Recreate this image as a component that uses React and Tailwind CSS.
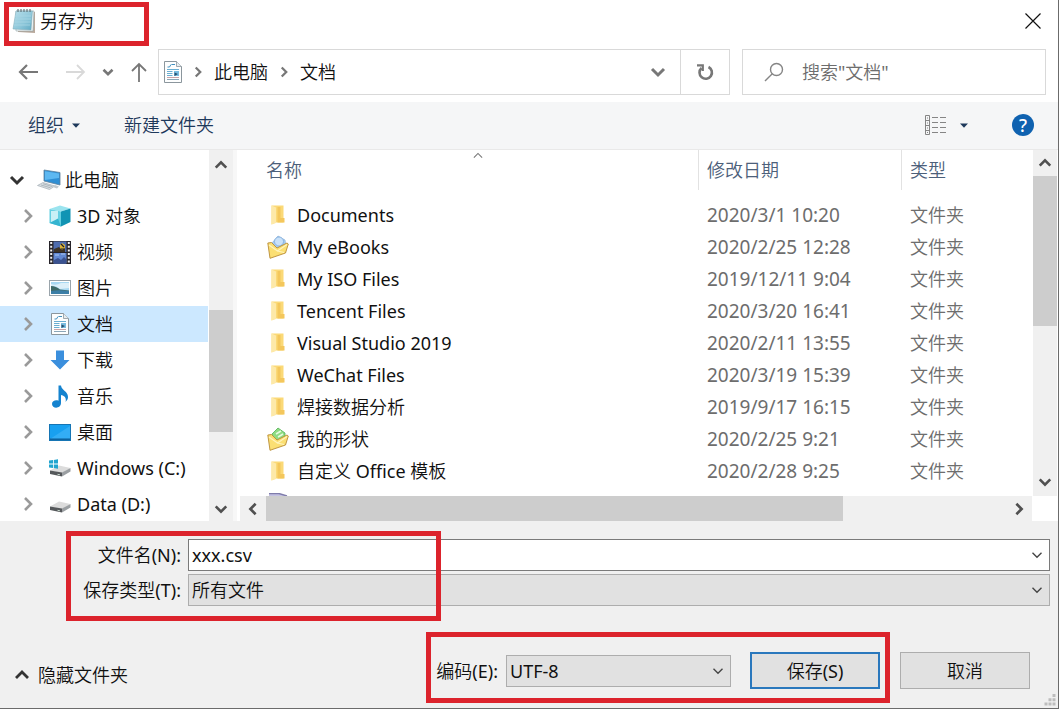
import React from 'react';

const CHEVRONS = {
  up: 'M2 11 L8 5 L14 11',
  down: 'M2 5 L8 11 L14 5',
  left: 'M11 2 L5 8 L11 14',
  right: 'M5 2 L11 8 L5 14',
};

function Chevron({ dir, className = '', weight = 3 }) {
  return (
    <svg viewBox="0 0 16 16" className={`shrink-0 ${className}`} fill="none" stroke="currentColor" strokeWidth={weight} aria-hidden="true">
      <path d={CHEVRONS[dir]} />
    </svg>
  );
}

function Caret() {
  return (
    <svg viewBox="0 0 8 5" className="h-[5px] w-2 shrink-0" aria-hidden="true">
      <path d="M0 0.5 H8 L4 4.8 Z" fill="#1e395b" />
    </svg>
  );
}

function NotepadIcon() {
  return (
    <svg viewBox="0 0 24 26" className="h-[26px] w-6 shrink-0" aria-hidden="true">
      <defs>
        <linearGradient id="pad" x1="0" y1="0" x2="1" y2="1">
          <stop offset="0" stopColor="#b9dfea" />
          <stop offset="0.6" stopColor="#8cc6d9" />
          <stop offset="1" stopColor="#5fa9c2" />
        </linearGradient>
      </defs>
      <path d="M5 3 L23 4 V25 L6 24 Z" fill="#b9a99c" />
      <path d="M4 3 L22 3 L21 23 L4 23 Z" fill="#f4f7f7" stroke="#90a4a9" strokeWidth="0.6" />
      <path d="M4 3 L20.500 3 L19 22 L1 21 Z" fill="url(#pad)" stroke="#7aa7b4" strokeWidth="0.5" />
      <path d="M3 8 H19 M3 11 H19 M2.500 14 H18.500 M2 17 H18" stroke="#a9d7e4" strokeWidth="0.8" />
      <path d="M6 1 V4 M9 1 V4 M12 1 V4 M15 1 V4 M18 1 V4" stroke="#65767b" strokeWidth="1.2" />
    </svg>
  );
}

function DocumentIcon() {
  return (
    <svg viewBox="0 0 18 22" className="h-[22px] w-[18px] shrink-0" aria-hidden="true">
      <path d="M0.500 0.500 H12.500 L17.500 5.500 V21.500 H0.500 Z" fill="#fdfefe" stroke="#8b969d" />
      <path d="M12.500 0.500 V5.500 H17.500" fill="#e6ecef" stroke="#8b969d" strokeWidth="0.8" />
      <path d="M7.500 3.500 H11 M3.500 6 H5.500 L7 3.500" stroke="#4190c0" strokeWidth="1" fill="none" />
      <path d="M3 8.500 H15 M3 10.500 H8.500 M3 12.500 H8.500 M3 14.500 H8.500" stroke="#6aaed2" strokeWidth="1" />
      <path d="M3 16.500 H15" stroke="#c9a3a8" strokeWidth="1" />
      <path d="M3 18.500 H15" stroke="#8aa6b8" strokeWidth="1" />
      <rect x="10" y="10" width="5" height="5" fill="#79bce0" />
      <path d="M10.500 11.500 L14 13 L10.500 15 Z" fill="#28506f" />
    </svg>
  );
}

function ComputerIcon() {
  return (
    <svg viewBox="0 0 24 22" className="h-[22px] w-6" aria-hidden="true">
      <path d="M7 1 L23 3.500 V16 L7 12 Z" fill="#2f8fd4" stroke="#5d7f99" strokeWidth="0.8" />
      <path d="M8 2.300 L22 4.500 L22 9 L8 11 Z" fill="#5db8f1" />
      <path d="M6 13.500 L18 17 L12.500 20.500 L0.500 16.500 Z" fill="#d9dee2" stroke="#a5afb6" strokeWidth="0.7" />
      <path d="M4 16 L13.500 18.800 M6 14.800 L15.500 17.600" stroke="#9aa6ae" strokeWidth="0.7" />
      <path d="M18 16 L22 17.500 L20 19.500 L17 18.500 Z" fill="#c1c9ce" />
    </svg>
  );
}

function CubeIcon() {
  return (
    <svg viewBox="0 0 22 22" className="h-[22px] w-[22px]" aria-hidden="true">
      <path d="M0.500 4 L11 0.500 L21.500 3.500 L12 6.500 Z" fill="#9be4ef" />
      <path d="M0.500 4 L12 6.500 V21.500 L0.500 18 Z" fill="#63cfe2" />
      <path d="M12 6.500 L21.500 3.500 V17 L12 21.500 Z" fill="#1194b4" />
      <path d="M2 6 L9 5.800 V16.500 L2 17 Z" fill="#c9f0f6" />
      <path d="M0.500 18 L9 13.500 L12 21.500 Z" fill="#35b4d0" />
    </svg>
  );
}

function VideoIcon() {
  return (
    <svg viewBox="0 0 22 23" className="h-[23px] w-[22px]" aria-hidden="true">
      <rect width="22" height="23" fill="#262329" />
      <path d="M2.200 1 V23 M19.800 1 V23" stroke="#f0f0f0" strokeWidth="2" strokeDasharray="2 1.700" />
      <rect x="4.500" y="0.500" width="13" height="10.500" fill="#4e6cae" />
      <rect x="4.500" y="12" width="13" height="10.500" fill="#6288d2" />
      <path d="M11 4 L13 2 L16 4 V9 H11 Z" fill="#d9b23c" />
      <path d="M5 8 L10 6 L13 9 L16 7 V11 H5 Z" fill="#3d3326" />
      <path d="M12 3 L15 6 M12 8 L15 8" stroke="#1f2126" strokeWidth="1.2" />
      <path d="M5 19 L9 17 L12 19 L15 16 L17 18 V22.500 H5 Z" fill="#3a5290" />
      <path d="M6 14 H10 M12 13 H16" stroke="#a8c6f2" strokeWidth="1" />
    </svg>
  );
}

function PictureIcon() {
  return (
    <svg viewBox="0 0 22 16" className="h-4 w-[22px]" aria-hidden="true">
      <rect x="0.500" y="0.500" width="21" height="15" fill="#fff" stroke="#9aa4ab" />
      <rect x="2" y="2" width="18" height="12" fill="#a8d8f2" />
      <path d="M2 6 Q6 5 11 9 L20 8 V3 H12 Q7 6 2 4 Z" fill="#dceff9" />
      <path d="M2 6 Q7 6 11 9.500 L20 10.500 V12 H2 Z" fill="#3f6a67" />
      <path d="M2 11 Q10 9.500 20 11 V14 H2 Z" fill="#3c7ea6" />
    </svg>
  );
}

function DownloadIcon() {
  return (
    <svg viewBox="0 0 20 20" className="h-5 w-5" aria-hidden="true">
      <path d="M6 0.500 H14 V10 H19.500 L10 19.500 L0.500 10 H6 Z" fill="#3b8fdd" />
    </svg>
  );
}

function MusicIcon() {
  return (
    <svg viewBox="0 0 18 23" className="h-[23px] w-[18px]" aria-hidden="true">
      <path d="M7.500 0.500 H10 C10.500 5.500 17 6 17 12 C17 14 16 15.500 14.500 17 C15.800 12.500 13 10.500 10 10 V18 C10 24 1 24 1 19 C1 15.500 5 14.500 7.500 15.700 Z" fill="#1583cf" />
    </svg>
  );
}

function DesktopIcon() {
  return (
    <svg viewBox="0 0 22 17" className="h-[17px] w-[22px]" aria-hidden="true">
      <rect x="0.500" y="0.500" width="21" height="16" fill="#18a0f0" stroke="#1675b4" />
      <path d="M1 15 L21 2 V15 Z" fill="#33adf5" />
      <path d="M1 15.200 H21" stroke="#0d5d97" strokeWidth="1.400" />
    </svg>
  );
}

function DriveIcon({ system }) {
  return (
    <svg viewBox="0 0 22 18" className="h-[18px] w-[22px]" aria-hidden="true">
      <path d="M1 11.500 L10 6.500 L21.500 9 L13 14 Z" fill="#dcdcdc" />
      <path d="M1 11.500 L13 13.500 V17.500 L1 15 Z" fill="#55585b" />
      <path d="M13 13.500 L21.500 9 V12.500 L13 17.500 Z" fill="#9b9fa2" />
      <path d="M8.500 15.300 L11 15.800" stroke="#c5d5ca" strokeWidth="1" />
      {system && (
        <g fill="#22a5cf">
          <path d="M0 1.500 L4 1 V4.600 H0 Z M4.800 0.900 L9 0.300 V4.600 H4.800 Z M0 5.400 H4 V9 L0 8.500 Z M4.800 5.400 H9 V9.700 L4.800 9.100 Z" />
        </g>
      )}
    </svg>
  );
}

function FolderIcon() {
  return (
    <svg viewBox="0 0 14 20" className="h-5 w-3.5" aria-hidden="true">
      <path d="M0.500 0.500 H12.500 V17.500 H5 L0.500 19.500 Z" fill="#fbd977" />
      <path d="M0.500 0.500 L5 2.500 V18 L0.500 19.500 Z" fill="#fde9a9" />
      <path d="M6.500 2 H9.500 V13 H13.500 V17.500 H6.500 Z" fill="#f4c75c" />
    </svg>
  );
}

function OpenFolderIcon({ kind }) {
  return (
    <svg viewBox="0 0 22 24" className="h-6 w-[22px]" aria-hidden="true">
      {kind === 'book' ? (
        <g>
          <path d="M5 8 L11 1 L18 5 L19 11 L9 16 Z" fill="#a9cdf0" stroke="#8fb3da" strokeWidth="0.7" />
          <circle cx="12" cy="6.500" r="4.500" fill="#c9e1f8" stroke="#7fabdc" strokeWidth="0.8" />
        </g>
      ) : (
        <g>
          <path d="M5 7 L11 1 L18 6 L18 12 L8 15 Z" fill="#8fdc83" stroke="#4fb053" strokeWidth="0.8" />
          <path d="M9 7 L14 4 M11 10 L16 7" stroke="#e5fbe0" strokeWidth="1.500" />
        </g>
      )}
      <path d="M0.800 8 L4.500 7.500 L10 13 L20 8 L21.300 9 L18.500 18 L3 23.300 Z" fill="#fbdf73" stroke="#b98c35" strokeWidth="0.9" />
      <path d="M2 10 L10.500 16 L20 9.500 M10.500 16 L17 17.500" fill="none" stroke="#fff4bd" strokeWidth="1.200" />
    </svg>
  );
}

function ArchiveIcon() {
  return (
    <svg viewBox="0 0 20 20" className="h-5 w-5" aria-hidden="true">
      <path d="M1 0.500 H11 L19 3 V19 H1 Z" fill="#c3c1e2" />
      <path d="M1 0.500 H11 L19 3" fill="none" stroke="#7f7cab" strokeWidth="1.400" />
    </svg>
  );
}

const TREE = [
  { name: '3D 对象', icon: <CubeIcon /> },
  { name: '视频', icon: <VideoIcon /> },
  { name: '图片', icon: <PictureIcon /> },
  { name: '文档', icon: <DocumentIcon />, selected: true },
  { name: '下载', icon: <DownloadIcon /> },
  { name: '音乐', icon: <MusicIcon /> },
  { name: '桌面', icon: <DesktopIcon /> },
  { name: 'Windows (C:)', icon: <DriveIcon system /> },
  { name: 'Data (D:)', icon: <DriveIcon /> },
];

const FILES = [
  { name: 'Documents', date: '2020/3/1 10:20' },
  { name: 'My eBooks', date: '2020/2/25 12:28', icon: <OpenFolderIcon kind="book" /> },
  { name: 'My ISO Files', date: '2019/12/11 9:04' },
  { name: 'Tencent Files', date: '2020/3/20 16:41' },
  { name: 'Visual Studio 2019', date: '2020/2/11 13:55' },
  { name: 'WeChat Files', date: '2020/3/19 15:39' },
  { name: '焊接数据分析', date: '2019/9/17 16:15' },
  { name: '我的形状', date: '2020/2/25 9:21', icon: <OpenFolderIcon kind="shape" /> },
  { name: '自定义 Office 模板', date: '2020/2/28 9:25' },
];

function Highlight({ className }) {
  return <div aria-hidden="true" className={`pointer-events-none absolute border-5 border-[#dc232c] ${className}`} />;
}

function ScrollButton({ dir, className }) {
  return (
    <button type="button" aria-label={`scroll ${dir}`} className={`flex shrink-0 items-center justify-center text-[#505050] ${className}`}>
      <Chevron dir={dir} className="size-3.5" />
    </button>
  );
}

function TitleBar() {
  return (
    <header className="relative flex h-12 shrink-0 items-center justify-between pr-4 pb-1.5 pl-3">
      <h1 className="flex items-center gap-1">
        <NotepadIcon />
        另存为
      </h1>
      <button type="button" aria-label="关闭" className="p-px">
        <svg viewBox="0 0 16 16" className="size-4" stroke="#111" strokeWidth="1.200" aria-hidden="true">
          <path d="M0.500 0.500 L15.500 15.500 M15.500 0.500 L0.500 15.500" />
        </svg>
      </button>
      <Highlight className="top-0.5 left-1 h-11 w-[145px]" />
    </header>
  );
}

function NavBar() {
  return (
    <nav className="flex h-[54px] shrink-0 items-start pt-px pr-3">
      <div className="flex h-[46px] w-[158px] shrink-0 items-center pl-[18px] text-[#777]">
        <button type="button" aria-label="后退" className="w-12">
          <svg viewBox="0 0 20 16" className="h-4 w-5" fill="none" stroke="currentColor" strokeWidth="2.200" aria-hidden="true">
            <path d="M20 8 H2 M9 1 L2 8 L9 15" />
          </svg>
        </button>
        <button type="button" aria-label="前进" disabled className="w-9 text-[#d9d9d9]">
          <svg viewBox="0 0 20 16" className="h-4 w-5" fill="none" stroke="currentColor" strokeWidth="1.800" aria-hidden="true">
            <path d="M0 8 H18 M11 1 L18 8 L11 15" />
          </svg>
        </button>
        <button type="button" aria-label="最近位置" className="w-[29px]">
          <Chevron dir="down" className="size-3" weight={3.5} />
        </button>
        <button type="button" aria-label="上移">
          <svg viewBox="0 0 16 20" className="h-5 w-4" fill="none" stroke="currentColor" strokeWidth="1.800" aria-hidden="true">
            <path d="M8 20 V2 M1 9 L8 2 L15 9" />
          </svg>
        </button>
      </div>
      <div className="flex h-[46px] flex-1 items-center border border-[#d9d9d9] pl-[5px]">
        <DocumentIcon />
        <Chevron dir="right" className="mx-2.5 size-3 text-[#777]" />
        <a href="#pc">此电脑</a>
        <Chevron dir="right" className="mx-2.5 size-3 text-[#777]" />
        <a href="#documents">文档</a>
        <button type="button" aria-label="展开路径" className="ml-auto flex h-full w-[46px] items-center justify-center border-r border-[#d9d9d9] text-[#777]">
          <Chevron dir="down" className="size-4" />
        </button>
        <button type="button" aria-label="刷新" className="flex h-full w-12 items-center justify-center">
          <svg viewBox="0 0 18 18" className="size-[18px]" fill="none" stroke="#777" strokeWidth="2.600" aria-hidden="true">
            <path d="M5.500 5 A6.200 6.200 0 1 0 12.500 4" />
            <path d="M1 2.300 H6.800 V8" strokeWidth="2.200" />
          </svg>
        </button>
      </div>
      <label className="ml-3 flex h-[46px] w-[304px] shrink-0 items-center gap-[18px] border border-[#d9d9d9] pl-[21px]">
        <svg viewBox="0 0 20 20" className="size-5 shrink-0" fill="none" stroke="#858585" strokeWidth="1.400" aria-hidden="true">
          <circle cx="12.500" cy="7.500" r="6" />
          <path d="M8.300 11.800 L1 19" />
        </svg>
        <input type="search" aria-label="搜索" placeholder={'搜索"文档"'} className="w-full min-w-0 bg-transparent outline-none placeholder:text-[#6d6d6d]" />
      </label>
    </nav>
  );
}

function Toolbar() {
  return (
    <div className="flex h-12 shrink-0 items-center border-b border-[#e9e9e9] bg-[#f5f6f7] pr-6 pb-px pl-7 text-[#1e395b]">
      <button type="button" className="mr-11 flex items-center gap-2">
        组织
        <Caret />
      </button>
      <button type="button">新建文件夹</button>
      <button type="button" aria-label="更改视图" className="ml-auto flex items-center gap-3.5">
        <svg viewBox="0 0 22 22" className="size-[22px]" fill="none" stroke="#858585" aria-hidden="true">
          <path d="M1.500 1.500 H5.500 V20.500 H1.500 Z M1.500 6.500 H5.500 M1.500 11.500 H5.500 M1.500 16.500 H5.500" />
          <path d="M3 4 H4 M3 9 H4 M3 14 H4 M3 18.500 H4" />
          <path d="M8 3.500 H14 M16 3.500 H22 M8 8.500 H14 M16 8.500 H22 M8 13.500 H14 M16 13.500 H22 M8 18.500 H14 M16 18.500 H22" />
        </svg>
        <Caret />
      </button>
      <button type="button" aria-label="帮助" className="ml-11 flex size-[22px] items-center justify-center rounded-full bg-[#0f62b0] leading-[22px] font-medium text-white">
        ?
      </button>
    </div>
  );
}

function Sidebar() {
  return (
    <aside className="flex w-[237px] shrink-0 border-r-4 border-[#f7f7f7]">
      <div className="min-w-0 flex-1 overflow-hidden pt-3">
        <button type="button" className="flex h-9 w-full items-center pl-[9px]">
          <Chevron dir="down" className="mr-3 size-4 text-[#333]" />
          <ComputerIcon />
          <span className="pl-1">此电脑</span>
        </button>
        <ul>
          {TREE.map((item) => (
            <li key={item.name}>
              <button type="button" className={`flex h-9 w-full items-center pl-5 text-left ${item.selected ? 'bg-[#cce8ff]' : ''}`}>
                <Chevron dir="right" className="size-4 text-[#9a9a9a]" weight={2.6} />
                <span className="mr-1 ml-[11px] flex w-[26px] shrink-0 items-center justify-center">{item.icon}</span>
                <span className="whitespace-nowrap">{item.name}</span>
              </button>
            </li>
          ))}
        </ul>
      </div>
      <div className="ml-px flex w-6 shrink-0 flex-col bg-[#f0f0f0]">
        <ScrollButton dir="up" className="h-[30px]" />
        <div className="grow-[130] basis-0" />
        <div className="grow-[122] basis-0 bg-[#cdcdcd]" />
        <div className="grow-[64] basis-0" />
        <ScrollButton dir="down" className="h-[25px]" />
      </div>
    </aside>
  );
}

function FileList() {
  return (
    <section className="flex min-w-0 flex-1 flex-col">
      <div className="flex min-h-0 flex-1">
        <div className="min-w-0 flex-1 overflow-hidden">
          <table className="w-full table-fixed border-collapse text-left">
            <thead className="text-[#4c607a]">
              <tr className="h-[49px] align-top">
                <th className="relative p-0 font-normal">
                  <div className="flex h-10 items-center pl-[29px]">名称</div>
                  <Chevron dir="up" className="absolute top-0 left-[234px] h-[11px] w-3.5 text-[#777]" weight={1.6} />
                </th>
                <th className="w-[203px] p-0 font-normal">
                  <div className="flex h-10 items-center border-l border-[#e2e2e2] pl-2">修改日期</div>
                </th>
                <th className="w-[132px] p-0 font-normal">
                  <div className="flex h-10 items-center border-l border-[#e2e2e2] pl-2">类型</div>
                </th>
              </tr>
            </thead>
            <tbody>
              {FILES.map((file) => (
                <tr key={file.name} className="h-8">
                  <td className="p-0">
                    <div className="flex h-8 items-center pl-[29px]">
                      <span className="mr-2 flex w-[23px] justify-center">{file.icon ?? <FolderIcon />}</span>
                      {file.name}
                    </div>
                  </td>
                  <td className="p-0 pl-[9px] text-[19px] leading-8 text-[#6d6d6d]">{file.date}</td>
                  <td className="p-0 pl-[9px] text-[#6d6d6d]">文件夹</td>
                </tr>
              ))}
              <tr className="h-8">
                <td colSpan={3} className="p-0 pl-[31px]">
                  <ArchiveIcon />
                </td>
              </tr>
            </tbody>
          </table>
        </div>
        <div className="flex w-6 shrink-0 flex-col bg-[#f0f0f0]">
          <ScrollButton dir="up" className="h-[26px]" />
          <div className="grow-[150] basis-0 bg-[#cdcdcd]" />
          <div className="grow-[142] basis-0" />
          <ScrollButton dir="down" className="h-7" />
        </div>
      </div>
      <div className="mr-[25px] ml-[3px] flex h-[25px] shrink-0 bg-[#f0f0f0]">
        <ScrollButton dir="left" className="w-[26px]" />
        <div className="grow-[577] basis-0 bg-[#cdcdcd]" />
        <div className="grow-[163] basis-0" />
        <ScrollButton dir="right" className="w-[26px]" />
      </div>
    </section>
  );
}

function Dropdown({ id, value, className = '' }) {
  return (
    <div className={`relative ${className}`}>
      <select id={id} defaultValue={value} className="h-8 w-full appearance-none rounded-none border border-[#adadad] bg-[#e1e1e1] pl-[3px] outline-none">
        <option>{value}</option>
      </select>
      <Chevron dir="down" className="pointer-events-none absolute top-2.5 right-[7px] size-3 text-[#444]" weight={1.8} />
    </div>
  );
}

function Footer() {
  return (
    <footer className="shrink-0 bg-[#f0f0f0]">
      <div className="relative grid grid-cols-[181px_1fr] items-center gap-x-[7px] gap-y-[3px] pt-[18px] pr-2">
        <label htmlFor="filename" className="text-right">文件名(N):</label>
        <div className="relative">
          <input id="filename" type="text" defaultValue="xxx.csv" className="h-8 w-full border border-[#7a7a7a] bg-white pl-[3px] outline-none" />
          <button type="button" aria-label="历史文件名" className="absolute top-2.5 right-[7px] text-[#444]">
            <Chevron dir="down" className="size-3" weight={1.8} />
          </button>
        </div>
        <label htmlFor="filetype" className="text-right">保存类型(T):</label>
        <Dropdown id="filetype" value="所有文件" />
        <Highlight className="top-2.5 left-[66px] h-[90px] w-[375px]" />
      </div>
      <div className="relative flex items-center pt-[46px] pr-7 pb-[19px] pl-3.5">
        <button type="button" className="mt-2 flex items-center gap-2">
          <Chevron dir="up" className="size-4 text-[#333]" weight={2.8} />
          隐藏文件夹
        </button>
        <div className="relative ml-auto flex items-center">
          <label htmlFor="encoding">编码(E):</label>
          <Dropdown id="encoding" value="UTF-8" className="ml-2 w-[225px]" />
          <button type="button" className="ml-[19px] h-[37px] w-[130px] border-2 border-[#2a78bd] bg-[#e1e1e1]">保存(S)</button>
          <Highlight className="-inset-x-2.5 -top-5 -bottom-3.5" />
        </div>
        <button type="button" className="ml-5 h-[37px] w-[130px] border border-[#adadad] bg-[#e1e1e1]">取消</button>
        <svg viewBox="0 0 12 12" className="absolute right-0.5 bottom-0.5 size-3" fill="#bdbdbd" aria-hidden="true">
          <path d="M8.500 0 H11.500 V3 H8.500 Z M4.500 4.300 H7.500 V7.300 H4.500 Z M8.500 4.300 H11.500 V7.300 H8.500 Z M0.500 8.600 H3.500 V11.600 H0.500 Z M4.500 8.600 H7.500 V11.600 H4.500 Z M8.500 8.600 H11.500 V11.600 H8.500 Z" />
        </svg>
      </div>
    </footer>
  );
}

export default function App() {
  return (
    <div className="flex h-screen flex-col overflow-hidden border-r border-b border-[#6b6b6b] bg-white font-['Noto_Sans','Noto_Sans_CJK_SC_DemiLight','Noto_Sans_CJK_SC_Light','Noto_Sans_CJK_SC',sans-serif] text-lg leading-6 font-normal text-[#111]">
      <TitleBar />
      <NavBar />
      <Toolbar />
      <main className="flex min-h-0 flex-1 pr-px">
        <Sidebar />
        <FileList />
      </main>
      <Footer />
    </div>
  );
}
